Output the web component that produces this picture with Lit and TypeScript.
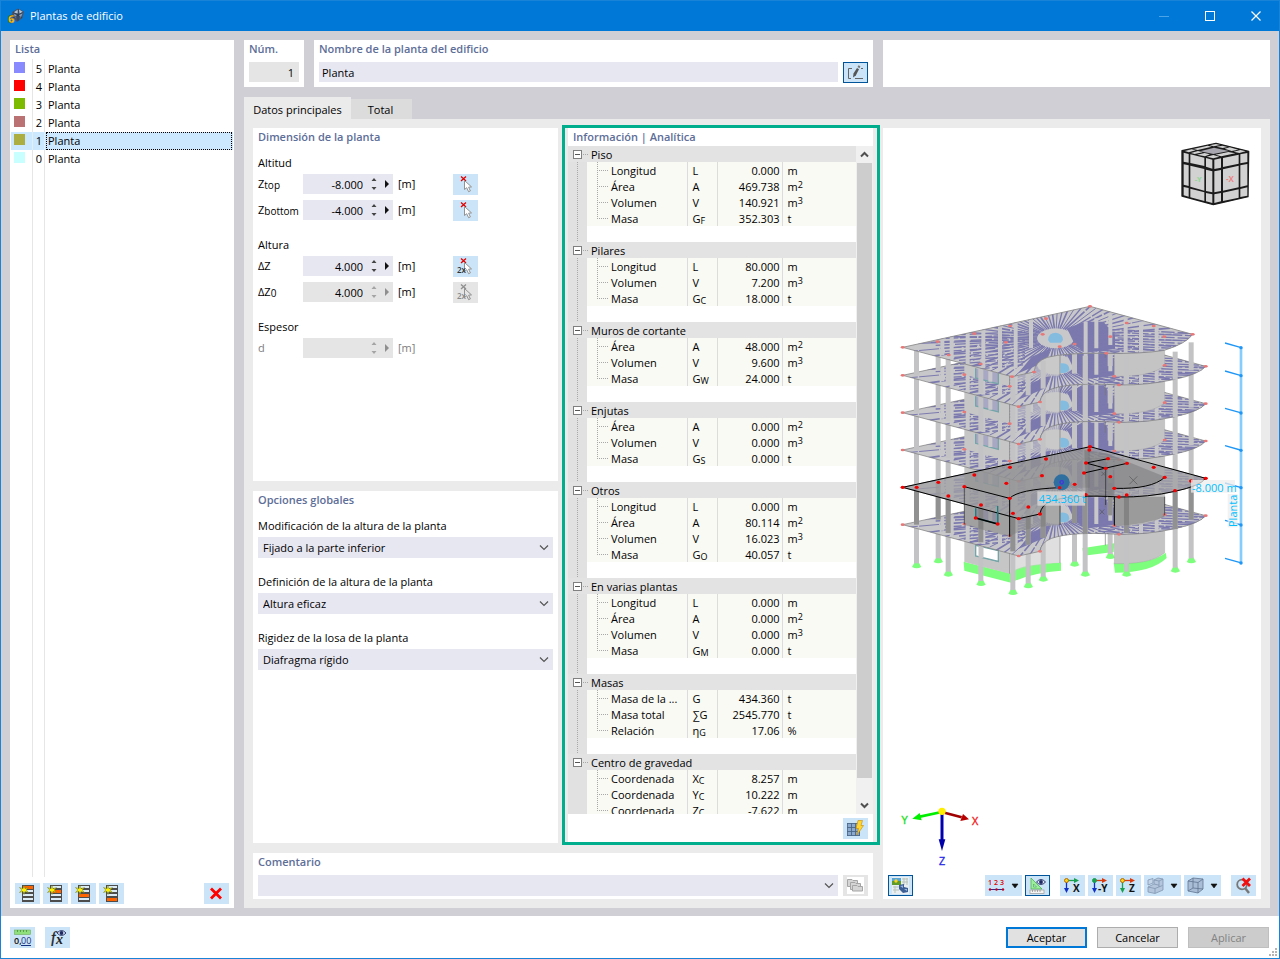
import { LitElement, html, svg, css } from "lit";
import { customElement, state } from "lit/decorators.js";
import { classMap } from "lit/directives/class-map.js";

type Storey = { no: number; color: string };
type Row = [name: string, symbol: string, sub: string, value: string, unit: string, power: string];
type Group = { title: string; rows: Row[] };

const STOREYS: Storey[] = [
  { no: 5, color: "#8a8aff" },
  { no: 4, color: "#ff0000" },
  { no: 3, color: "#7dbb00" },
  { no: 2, color: "#bb7272" },
  { no: 1, color: "#acae42" },
  { no: 0, color: "#c8ffff" },
];

const GROUPS: Group[] = [
  { title: "Piso", rows: [
    ["Longitud", "L", "", "0.000", "m", ""],
    ["Área", "A", "", "469.738", "m", "2"],
    ["Volumen", "V", "", "140.921", "m", "3"],
    ["Masa", "G", "F", "352.303", "t", ""]] },
  { title: "Pilares", rows: [
    ["Longitud", "L", "", "80.000", "m", ""],
    ["Volumen", "V", "", "7.200", "m", "3"],
    ["Masa", "G", "C", "18.000", "t", ""]] },
  { title: "Muros de cortante", rows: [
    ["Área", "A", "", "48.000", "m", "2"],
    ["Volumen", "V", "", "9.600", "m", "3"],
    ["Masa", "G", "W", "24.000", "t", ""]] },
  { title: "Enjutas", rows: [
    ["Área", "A", "", "0.000", "m", "2"],
    ["Volumen", "V", "", "0.000", "m", "3"],
    ["Masa", "G", "S", "0.000", "t", ""]] },
  { title: "Otros", rows: [
    ["Longitud", "L", "", "0.000", "m", ""],
    ["Área", "A", "", "80.114", "m", "2"],
    ["Volumen", "V", "", "16.023", "m", "3"],
    ["Masa", "G", "O", "40.057", "t", ""]] },
  { title: "En varias plantas", rows: [
    ["Longitud", "L", "", "0.000", "m", ""],
    ["Área", "A", "", "0.000", "m", "2"],
    ["Volumen", "V", "", "0.000", "m", "3"],
    ["Masa", "G", "M", "0.000", "t", ""]] },
  { title: "Masas", rows: [
    ["Masa de la ...", "G", "", "434.360", "t", ""],
    ["Masa total", "∑G", "", "2545.770", "t", ""],
    ["Relación", "η", "G", "17.06", "%", ""]] },
  { title: "Centro de gravedad", rows: [
    ["Coordenada", "X", "C", "8.257", "m", ""],
    ["Coordenada", "Y", "C", "10.222", "m", ""],
    ["Coordenada", "Z", "C", "-7.622", "m", ""]] },
];

const base = css`
  * { box-sizing: border-box; }
  button, input, select {
    font: inherit; color: inherit; margin: 0; padding: 0; border: 0; border-radius: 0; background: none;
  }
  svg { display: block; }
  .tool {
    width: 25px; height: 21px; flex: none; background: #cce4f7;
    display: flex; align-items: center; justify-content: center;
  }
  .tool.wide { width: 37px; gap: 6px; }
  .tool.on { border: 1px solid #005499; }
  .tool.off { background: #e5e5e5; }
`;

/* ---------- icons ---------- */

const icon = (body: unknown, w = 17, h = 17) =>
  html`<svg width=${w} height=${h} viewBox="0 0 ${w} ${h}" aria-hidden="true">${body}</svg>`;

const appIcon = icon(svg`
  <path d="M4 4 L10 .5 L16 3.500 L14.500 10 L9 14 L4 9Z" fill="#44546c"/>
  <path d="M5.500 4.500 L10 1.500 L10 5.500Z M11 1.500 L15 4 L11.500 5.500Z" fill="#b4c3d6"/>
  <path d="M6 6 L9 7 L7 10Z M11 7 L14.500 5.500 L12.500 10Z" fill="#8b9eb8"/>
  <path d="M5 4 L14 10 M15 4 L5 10 M10 1 V13" stroke="#1f2c40" stroke-width=".5"/>
  <text x="0" y="15" font-family="Open Sans" font-weight="800" font-size="11" fill="#f5c21b" stroke="#5b4300" stroke-width=".3">6</text>`);

const listIcon = (row: number) => icon(svg`
  <rect x="3" y="0" width="12" height="17" fill="#4d4d4d"/>
  ${[0, 1, 2, 3].map(i => svg`<rect x="4" y=${1 + i * 4} width="10" height=${i === row ? 3 : 2} fill=${i === row ? "#ff6400" : "#dcebf8"}/>`)}
  <path d="M5 .5 L6 3.700 L9.500 2.500 L7.200 5 L9.500 7.500 L6 6.300 L5 9.500 L4 6.300 L.5 7.500 L2.800 5 L.5 2.500 L4 3.700Z" fill="#fff200" stroke="#6c7a18" stroke-width=".5"/>`);

const deleteIcon = icon(svg`<path d="M2 2.500 L12 12.500 M12 2.500 L2 12.500" stroke="#f00" stroke-width="2.800"/>`, 15, 15);

const editIcon = icon(svg`
  <path d="M5 4.500 H1.500 V14.500 H4 M8 14.500 H16 M14 4.500 H16" fill="none" stroke="#666"/>
  <path d="M6.500 9.500 L10 4 L12 5.200 L8.800 11.500 L6 13.500Z" fill="#555"/>
  <path d="M10.500 3 L11.500 1.200 L13.400 2.300 L12.500 4.200Z" fill="#777"/>`);

const pickIcon = (twice: boolean, off = false) => icon(svg`
  <path d="M4 .5 L9 5 M9 .5 L4 5" stroke=${off ? "#8f8f8f" : "#e00000"} stroke-width="1.300"/>
  <path d="M7.500 4.500 V13.500 L9.700 11.700 L11.600 15.700 L13.400 14.900 L11.600 11.200 L14.500 10.900Z" fill=${off ? "#e5e5e5" : "#fff"} stroke="#888" stroke-width=".9"/>
  ${twice ? svg`<text x="0" y="15" font-family="Open Sans" font-size="8" font-weight="600" fill=${off ? "#8a8a8a" : "#333"}>2x</text>` : ""}`);

const gridBoltIcon = icon(svg`
  <rect x="1" y="3.500" width="12" height="12" fill="#8aa9cd"/>
  <path d="M.5 3 V16 M4.500 3 V16 M8.500 3 V16 M12.500 3 V16 M0 3.500 H13 M0 7.500 H13 M0 11.500 H13 M0 15.500 H13" stroke="#4a6788" stroke-width=".9"/>
  <path d="M11 .5 H15.500 L14 5.500 H16.500 L10 15 L11.500 8.500 H9Z" fill="#ffd634" stroke="#c98a00" stroke-width=".6"/>`);

const stackIcon = icon(svg`
  <rect width="17" height="17" fill="#fff"/>
  <g fill="#d5d5d5" stroke="#a5a5a5">
    <path d="M.5 2.500 H5 L6 3.500 H10.500 V9.500 H.5Z"/>
    <path d="M3.500 5.500 H8 L9 6.500 H13.500 V12.500 H3.500Z"/>
    <path d="M5.500 8.500 H10 L11 9.500 H15.500 V14 H5.500Z"/>
  </g>`);

const unitsIcon = icon(svg`
  <rect x=".5" y="1" width="16" height="4.500" fill="#8fe07c" stroke="#6dae60" stroke-width=".6"/>
  <path d="M3.500 1 V3 M6.500 1 V3 M9.500 1 V3 M12.500 1 V3" stroke="#4b9140" stroke-width=".8"/>
  <text x="0" y="15" font-family="Open Sans" font-size="9" font-weight="600" fill="#111">0,</text>
  <text x="7" y="15" font-family="Open Sans" font-size="9" fill="#17307f">00</text>
  <path d="M7 16.500 H17" stroke="#17307f"/>`, 18, 17);

const eye = (x: number, y: number) => svg`
  <g transform="translate(${x} ${y})">
    <path d="M0 3 Q4.500 -2 9 3 Q4.500 8 0 3Z" fill="#dfe6f5" stroke="#1e2a63" stroke-width=".9"/>
    <circle cx="4.500" cy="3" r="1.900" fill="#1e2a63"/>
  </g>`;

const formulaIcon = icon(svg`
  <text x="2" y="14" font-family="Liberation Serif" font-style="italic" font-size="16" fill="#222" stroke="#222" stroke-width=".3">f</text>
  <text x="7" y="15" font-family="Liberation Serif" font-style="italic" font-weight="700" font-size="14" fill="#222">x</text>
  ${eye(8, 1)}`, 18, 17);

const renderIcon = icon(svg`
  <rect x="0" y="0" width="17" height="17" fill="#e8eef2"/>
  <rect x="0" y="1" width="9" height="7" fill="#5f9b2a"/><rect x="0" y="1" width="9" height="3" fill="#5aa5d8"/>
  <circle cx="4" cy="4" r="1.700" fill="#ffd21c"/>
  <path d="M10 2 H16 M10 5 H16 M12 1 V8 M15 1 V8 M1 10 H7 M1 13 H7 M3 9 V16" stroke="#b9c3bb"/>
  <path d="M7 8 L12 7 L12 10 L16 11 V15 L11 16 L7 12Z" fill="#3c5f95"/><path d="M8 9 L11 8.500 V11Z M12 12 L15 12 V14Z" fill="#9fb9de"/>`);

const numbersIcon = icon(svg`
  <g font-family="Open Sans" font-size="7" font-weight="600" fill="#e00000">
    <text x="0" y="8">1</text><text x="6" y="8">2</text><text x="12" y="8">3</text></g>
  <path d="M1 12.500 H16" stroke="#2b2b8a"/>
  <circle cx="2" cy="12.500" r="1.200" fill="#c00020"/><circle cx="8.500" cy="12.500" r="1.200" fill="#c00020"/><circle cx="15" cy="12.500" r="1.200" fill="#c00020"/>`);

const rulerEyeIcon = icon(svg`
  <path d="M2 1 V12 H13Z" fill="#9df09a" stroke="#4fae58" stroke-width=".8"/>
  <path d="M4.500 7 V10 H7.500Z" fill="#cce4f7" stroke="#4fae58" stroke-width=".7"/>
  <rect x="1" y="13" width="14" height="3.500" fill="#f4f4f4" stroke="#999" stroke-width=".7"/>
  <path d="M3.500 13 V15 M6 13 V15 M8.500 13 V15 M11 13 V15" stroke="#888" stroke-width=".7"/>
  ${eye(7.5, 2)}`);

const axisIcon = (label: string, right: string, down: string, dot: string) => icon(svg`
  <path d="M3 3.500 H11" stroke=${right} stroke-width="1.300"/><path d="M10 1 L15 3.500 L10 6Z" fill=${right}/>
  <path d="M2.500 4 V12" stroke=${down} stroke-width="1.300"/><path d="M0 11 L2.500 16 L5 11Z" fill=${down}/>
  <circle cx="2.500" cy="3.500" r="2" fill=${dot} stroke=${dot === "#ffd21c" ? "#b36b00" : dot}/>
  <text x=${label.length > 1 ? 6 : 9} y="15" font-family="Open Sans" font-weight="700" font-size="10" fill="#111">${label}</text>`, 17, 17);

const blocksIcon = icon(svg`
  <g fill="#b3c6dc" stroke="#8296b0" stroke-width=".8">
    <path d="M1 10 L7 7 V3 L11 1 L16 2 V13 L8 16.500 L1 15Z"/>
    <path d="M1 10 L8 11.500 L15.500 8.500 M8 11.500 V16 M7 3 L12 4 L16 2 M12 4 V10 M7 7 L12 8.200" fill="none"/>
    <path d="M1 3 L6 1.500 L6 6 L1 8Z" fill="#c4d5e7"/></g>`);

const boxIcon = icon(svg`
  <g fill="#a9bdd6" stroke="#5f7490" stroke-width=".8">
    <path d="M1 4 L6 1 L16 2 V12 L11 16 L1 14Z"/><path d="M1 4 L11 5.500 L16 2 M11 5.500 V16 M6 1 V11 L1 14 M6 11 L16 12" fill="none"/></g>`);

const zoomOffIcon = icon(svg`
  <circle cx="7" cy="7.500" r="4.800" fill="none" stroke="#777" stroke-width="1.800"/>
  <path d="M10 11 L14 16" stroke="#777" stroke-width="2.400"/>
  <path d="M7.500 1.500 L15 9 M15 1.500 L7.500 9" stroke="#f01010" stroke-width="2.800"/>`);

const caret = icon(svg`<path d="M1 1 H7 L4 5Z" fill="#111" stroke="#111" stroke-width=".6"/>`, 8, 6);

/* ---------- model view ---------- */

const COLUMNS: [number, number][] = [
  [676, 797], [569, 820], [919, 810], [160, 810], [95, 825], [871, 838], [601, 850],
  [725, 850], [190, 850], [475, 865], [430, 885], [288, 878], [384, 905],
];

@customElement("model-view")
export class ModelView extends LitElement {
  static styles = [base, css`
    :host { display: flex; min-height: 0; }
    .scene { width: 100%; height: 100%; font-family: "Open Sans", "Noto Sans", sans-serif; }
  `];

  private floor(dy: number) {
    return `M53 ${592 + dy} L615 ${470 + dy} L962 ${565 + dy} Q945 ${588 + dy} 870 ${604 + dy} Q790 ${622 + dy} 702 ${621 + dy} Q560 ${612 + dy} 500 ${633 + dy} Q468 ${645 + dy} 465 ${672 + dy} L401 ${686 + dy}Z`;
  }

  private roof = "M53 172 L615 49 L923 133 Q905 160 838 181 Q770 192 664 190 Q540 188 487 202 Q450 215 447 246 L381 260Z";

  /* radial light pattern around the core, cut by the grey strips between panels */
  private rays(id: string, cy: number) {
    const cx = 512;
    const lines = [];
    for (let i = 0; i < 64; i++) {
      const a = (i / 64) * Math.PI * 2 + 0.03;
      const x = Math.cos(a) * 620, y = Math.sin(a) * 330;
      lines.push(svg`<path d="M${(cx + x * 0.09).toFixed(1)} ${(cy + y * 0.09).toFixed(1)} L${(cx + x).toFixed(1)} ${(cy + y).toFixed(1)}"
        stroke-width=${3 + (i % 3)} stroke-dasharray=${i % 2 ? "80 5 120 7" : "110 6 60 4"}/>`);
    }
    const strands = [];
    for (let i = 0; i < 12; i++) {
      strands.push(svg`<path d="M${110 + i * 14} ${cy - 6 + i * 9} L420 ${cy - 20 + i * 9} M640 ${cy - 28 + i * 8} L960 ${cy - 14 + i * 8}" stroke-width="4"
        stroke-dasharray=${i % 2 ? "50 8 38 5" : "64 6 40 9"}/>`);
    }
    return svg`<g clip-path="url(#${id})" stroke="#7b79ae" fill="none">
      <path d="M546 ${cy - 30} L600 ${cy - 50} H655 L690 ${cy - 10} V${cy + 32} L600 ${cy + 44} L570 ${cy + 20}Z" fill="#7b79ae" stroke="none"/>
      <path d="M498 ${cy + 30} L482 ${cy + 70} L400 ${cy + 105} L440 ${cy + 55}Z" fill="#7b79ae" stroke="none"/>
      ${lines}${strands}
      <path d="M602 ${cy - 50} V${cy + 60} M634 ${cy - 60} V${cy + 30} M172 ${cy} V${cy + 50} M200 ${cy - 10} V${cy + 90} M248 ${cy - 20} V${cy + 90} M295 ${cy - 30} V${cy + 90} M345 ${cy - 40} V${cy + 90} M392 ${cy - 50} V${cy + 90} M438 ${cy - 60} V${cy + 30} M676 ${cy - 70} V${cy + 20} M722 ${cy - 60} V${cy + 60} M768 ${cy - 50} V${cy + 60} M815 ${cy - 40} V${cy + 60}" stroke="#c8c8ca" stroke-width="12"/>
    </g>`;
  }

  private dots(dy: number) {
    const pts = [[53, 592], [962, 565], [401, 686], [465, 672], [702, 621], [238, 590], [374, 625], [839, 562], [688, 595]];
    return pts.map(([x, y]) => svg`<ellipse cx=${x} cy=${y + dy} rx="6" ry="4" fill="#e87878"/>`);
  }

  private storey(top: number, bottom: number) {
    return svg`
      <path d="M238 ${590 + top} L374 ${625 + top} L374 ${625 + bottom} L238 ${590 + bottom}Z" fill="#c6c6c7"/>
      <path d="M374 ${625 + top} Q400 ${600 + top} 524 ${593 + top} V${593 + bottom} Q410 ${600 + bottom} 374 ${625 + bottom}Z" fill="#c9c9ca" opacity=".6"/>
      <path d="M688 ${595 + top} Q800 ${597 + top} 839 ${562 + top} V${562 + bottom} Q800 ${597 + bottom} 688 ${595 + bottom}Z" fill="#c4c4c5" stroke="#999"/>
      <path d="M668 ${550 + top} H686 V${585 + top} H668Z" fill="#c9c9ca"/>
      <path d="M272 ${655 + top} V${684 + top} L340 ${702 + top} V${668 + top}" fill="#a9a8c4" stroke="#74a5a8" stroke-width="4"/>
      <path d="M288 ${655 + top} V${688 + top} M316 ${662 + top} V${695 + top}" stroke="#c9c9cc" stroke-width="12"/>
      <path d="M374 ${625 + top} V${625 + bottom} M525 ${593 + top} V${593 + bottom} M661 ${540 + top} V${540 + bottom}" stroke="#777" stroke-width="2"/>`;
  }

  private columns(top: number, bottom: number, fill: string) {
    return COLUMNS.map(([x, y]) => svg`<rect x=${x - 8} y=${y - 233 + top} width="15" height=${bottom - top} fill=${fill}/>`);
  }

  private lamp(y: number) {
    return svg`<path d="M526 ${y - 16} Q552 ${y - 20} 553 ${y + 2} Q548 ${y + 16} 526 ${y + 12}Z" fill="#84bce0"/>`;
  }

  private building() {
    const levels = [112, 0, -112, -224, -336];
    const dims = [172, 256, 368, 480, 592, 704, 818];
    return svg`
      <defs>
        ${levels.map((dy, i) => svg`<clipPath id="f${i}"><path d=${this.floor(dy)}/></clipPath>`)}
        <clipPath id="roof"><path d=${this.roof}/></clipPath>
      </defs>
      <g fill="#7dff7d">
        <path d="M236 815 L374 850 Q400 822 528 818 V842 Q440 848 378 878 L238 842Z"/>
        <path d="M686 818 Q800 822 842 788 L845 804 Q800 848 690 848Z"/>
        <path d="M592 775 L688 760 L686 786 L596 797Z"/>
        ${COLUMNS.map(([x, y]) => svg`<path d="M${x - 5} ${y - 10} H${x + 5} L${x + 14} ${y + 6} Q${x} ${y + 14} ${x - 14} ${y + 6}Z"/>`)}
      </g>
      ${this.storey(112, 226)}${this.columns(112, 228, "#c3c3c5")}
      <path d="M272 766 V798 L340 814 V782Z" fill="#fff" stroke="#74a5a8" stroke-width="4"/>
      <path d="M288 760 V804" stroke="#c3c3c5" stroke-width="15"/>
      ${levels.map((dy, i) => svg`
        <path d=${this.floor(dy)} fill="#c8c8cb"/>
        ${this.rays(`f${i}`, 560 + dy)}
        <path d=${this.floor(dy)} fill="none" stroke="#777" stroke-width="2"/>
        ${this.storey(i === 4 ? -420 : dy - 112, dy)}
        ${this.columns(i === 4 ? -420 : dy - 112, dy, "#c3c3c5")}
        ${this.lamp(572 + dy)}
        ${this.dots(dy)}`)}
      <path d=${this.roof} fill="#c8c8cb"/>
      ${this.rays("roof", 145)}
      <path d=${this.roof} fill="none" stroke="#888" stroke-width="2.500"/>
      <path d="M489 150 Q491 128 512 128 Q534 130 534 150 L528 158 H495Z" fill="#84bce0"/>
      ${[[53, 172], [615, 49], [923, 133], [381, 260], [447, 246], [664, 190], [158, 155], [268, 131], [375, 108], [483, 86], [191, 195], [287, 222], [473, 133], [725, 99], [806, 108], [838, 140], [676, 140], [569, 162], [524, 170], [363, 157]].map(([x, y]) =>
        svg`<ellipse cx=${x} cy=${y} rx="6" ry="4" fill="#e87878"/>`)}

      <path d="M238 590 L374 625 V740 L238 705Z" fill="#6a6a6a" opacity=".4"/>
      <path d="M374 625 Q420 592 524 593 V705 Q410 712 374 740Z" fill="#6a6a6a" opacity=".35"/>
      <path d="M688 620 H839 V680 Q780 705 688 707Z" fill="#6a6a6a" opacity=".45"/>
      ${COLUMNS.map(([x, y]) => svg`<rect x=${x - 8} y=${y - 233} width="15" height="112" fill="#777" opacity=".65"/>`)}
      <path d=${this.floor(0)} fill="#a2a2a4" opacity=".75"/>
      <path d="M238 552 L374 522 V625 L238 590Z M374 522 L615 470 V593 H524 Q410 600 374 625Z" fill="#777" opacity=".3"/>
      <path d="M598 480 L665 490 L840 560 Q800 598 688 595 V620 H602Z" fill="#555" opacity=".3"/>
      <path d=${this.floor(0)} fill="none" stroke="#000" stroke-width="3"/>
      <g fill="none" stroke="#000" stroke-width="3">
        <path d="M238 590 L374 625 Q400 598 524 593"/><path d="M688 595 Q800 598 839 562"/>
        <path d="M669 506 L603 519 L662 535 M597 549 L726 520"/>
        <path d="M374 625 V740 M688 621 V707"/>
        <path d="M238 590 V703 M839 620 V675 M525 640 V705 M662 535 V645" stroke-width="1.500"/>
      </g>
      <path d="M272 655 V684 L338 702 V648" fill="none" stroke="#1d8080" stroke-width="4"/>
      <path d="M272 684 L338 702" stroke="#000" stroke-width="4"/>
      <g stroke="#555" stroke-width="2"><path d="M733 559 L757 583 M757 559 L733 583 M644 658 L658 673 M658 658 L644 673 M649 545 L662 558 M662 545 L649 558"/></g>
      ${[[53, 592], [95, 592], [160, 577], [190, 618], [238, 590], [268, 555], [288, 645], [375, 532], [374, 625], [384, 670], [364, 580], [430, 651], [401, 686], [465, 672], [471, 557], [483, 507], [569, 583], [524, 593], [597, 549], [603, 519], [602, 614], [613, 480], [615, 470], [669, 506], [662, 535], [676, 560], [688, 595], [702, 621], [725, 615], [726, 520], [806, 532], [839, 562], [870, 602], [918, 573], [962, 565], [272, 684], [338, 702]].map(([x, y]) =>
        svg`<ellipse cx=${x} cy=${y} rx="6" ry="5" fill="#f00000"/>`)}
      <circle cx="530" cy="577" r="24" fill="#2f6f9f"/><circle cx="530" cy="577" r="5" fill="none" stroke="#4338d8" stroke-width="4"/>
      <circle cx="524" cy="593" r="5" fill="#f00000"/>
      <rect x="457" y="604" width="143" height="43" fill="#d9d9d9" opacity=".8"/>
      <text x="461" y="639" font-size="33" fill="#00bfff">434.360 t</text>

      <path d="M1068 172 V820" stroke="#84cdfd" stroke-width="8"/>
      ${dims.map(y => svg`<path d="M1020 ${y - 13} L1066 ${y}" stroke="#1e96f5" stroke-width="4"/><circle cx="1068" cy=${y + 1} r="5" fill="#1e96f5"/>`)}
      <rect x="918" y="570" width="132" height="38" fill="#eeeeee" opacity=".75"/>
      <text x="921" y="606" font-size="33" fill="#00bfff">-8.000 m</text>
      <rect x="1028" y="612" width="30" height="100" fill="#eeeeee" opacity=".75"/>
      <text transform="translate(1056 711) rotate(-90)" font-size="33" fill="#00bfff">Planta</text>`;
  }

  private cube() {
    return svg`
      <path d="M66 62 L168 40 L266 64 L264 200 L160 224 L66 198Z" fill="#1b1b1b" stroke="#1b1b1b" stroke-width="4" stroke-linejoin="round"/>
      <g fill="#d2d2d3">
        <path d="M71 68 L86 72 V98 L71 95Z M91 73 L133 83 V108 L91 99Z M138 84 L157 89 V116 L138 110Z"/>
        <path d="M71 103 L86 106 V168 L71 164Z M91 107 L133 117 V182 L91 170Z M138 119 L157 124 V187 L138 183Z"/>
        <path d="M71 171 L86 174 V200 L71 196Z M91 176 L133 187 V213 L91 202Z M138 189 L157 193 V219 L138 214Z"/>
        <path d="M163 89 L183 85 V113 L163 117Z M189 84 L236 74 V101 L189 111Z M241 73 L262 69 V96 L241 100Z"/>
        <path d="M163 124 L183 120 V183 L163 187Z M189 118 L236 107 V172 L189 182Z M241 106 L262 102 V166 L241 171Z"/>
        <path d="M163 193 L183 189 V214 L163 219Z M189 188 L236 178 V203 L189 213Z M241 177 L262 172 V197 L241 201Z"/>
        <path d="M74 63 L95 58 L107 61 L86 67Z M100 57 L143 47 L155 50 L113 60Z M149 46 L168 42 L181 45 L161 49Z"/>
        <path d="M93 69 L114 63 L128 67 L104 72Z M187 47 L203 51 L188 54 L170 50Z M209 52 L235 59 L215 63 L194 56Z M241 60 L257 64 L238 69 L221 65Z"/>
        <path d="M111 74 L134 69 L150 73 L135 79Z M140 80 L160 75 L178 80 L160 85Z M166 74 L205 66 L226 70 L184 79Z"/>
        <path d="M120 64 L162 53 L207 63 L160 72Z" fill="#a8a6ae"/>
      </g>
      <text x="104" y="156" font-size="22" font-weight="700" fill="#8fd896">-Y</text>
      <text x="198" y="156" font-size="24" font-weight="700" fill="#ee8484">-X</text>`;
  }

  private axes() {
    return svg`
      <path d="M170 66 L105 80" stroke="#00ee00" stroke-width="8"/><path d="M82 86 L104 69 L110 91Z" fill="#00f000"/>
      <path d="M170 66 L230 82" stroke="#a00000" stroke-width="8"/><path d="M252 88 L234 72 L226 93Z" fill="#b80000"/>
      <path d="M171 70 V150" stroke="#0000b0" stroke-width="9"/><path d="M171 183 L161 148 H181Z" fill="#0000a8"/>
      <circle cx="171" cy="64" r="11" fill="#ffee00"/>
      <g font-size="30" font-family="Liberation Sans">
        <text x="49" y="102" fill="#18e018" stroke="#18e018">Y</text><text x="260" y="105" fill="#f01818" stroke="#f01818">X</text><text x="162" y="224" fill="#2828e8" stroke="#2828e8">Z</text>
      </g>`;
  }

  render() {
    return html`<svg class="scene" viewBox="883 128 378 742" role="img" aria-label="Modelo">
      <g transform="translate(885 290) scale(.33333)">${this.building()}</g>
      <g transform="translate(1160 130) scale(.33333)">${this.cube()}</g>
      <g transform="translate(885 790) scale(.33333)">${this.axes()}</g>
    </svg>`;
  }
}

/* ---------- analysis tree ---------- */

@customElement("info-tree")
export class InfoTree extends LitElement {
  static styles = [base, css`
    :host { display: flex; min-height: 0; overflow: hidden; }
    .body { flex: 1; min-width: 0; overflow: hidden; }
    .tree { width: 100%; border-collapse: collapse; table-layout: fixed; line-height: 14px; }
    .tree td, .tree th { padding: 2px 0 0; height: 16px; font-weight: 400; text-align: left; white-space: nowrap; }
    .tree th { padding: 0; }
    .gutter { width: 19px; } .name { width: 100px; } .sym { width: 30px; } .val { width: 65px; }
    .tree .trunk {
      background: repeating-linear-gradient(180deg, #a8a8a8 0 1px, transparent 1px 2px) 9px 0 / 1px 100% no-repeat, #e1e1e1;
    }
    .tree .bare { background: #e1e1e1; }
    .group { background: #e3e3e3; }
    .head { display: flex; align-items: center; gap: 9px; height: 16px; padding-left: 5px;
      background: repeating-linear-gradient(90deg, #a8a8a8 0 1px, transparent 1px 2px) 15px 8px / 5px 1px no-repeat; }
    .caption { padding-top: 2px; }
    .box { width: 9px; height: 9px; border: 1px solid #808080; background: #fff; display: flex; align-items: center; justify-content: center; }
    .box::before { content: ""; width: 5px; height: 1px; background: #555; }
    .item { background: #f9faf4; }
    .tree .label { padding-left: 24px; overflow: hidden; text-overflow: ellipsis; background:
      repeating-linear-gradient(180deg, #a8a8a8 0 1px, transparent 1px 2px) 10px 0 / 1px 100% no-repeat,
      repeating-linear-gradient(90deg, #a8a8a8 0 1px, transparent 1px 2px) 10px 8px / 11px 1px no-repeat; }
    .tree .label.last { background-size: 1px 9px, 11px 1px; }
    .tree .cell { border-left: 1px solid #dcdcdc; padding-left: 5px; }
    .tree .num { text-align: right; padding-right: 2px; }
    sub, sup { font-size: 9px; line-height: 0; vertical-align: -1px; }
    sup { vertical-align: 3px; }
    .bar { flex: none; width: 17px; padding: 0 1px; background: #f0f0f0; display: flex; flex-direction: column; }
    .arrow { height: 17px; flex: none; display: flex; align-items: center; justify-content: center; }
    .rail { flex: 1; display: flex; flex-direction: column; }
    .thumb { flex: 0 0 97%; background: #cdcdcd; }
  `];

  render() {
    return html`
      <div class="body">
        <table class="tree">
          <colgroup><col class="gutter"><col class="name"><col class="sym"><col class="val"><col></colgroup>
          ${GROUPS.map((g, gi) => {
            const trunk = gi < GROUPS.length - 1 ? "trunk" : "bare";
            return html`<tbody>
              <tr class="group"><th colspan="5" scope="rowgroup"><div class="head"><button class="box" aria-label="Contraer ${g.title}"></button><span class="caption">${g.title}</span></div></th></tr>
              ${g.rows.map(([name, sym, sub, value, unit, power], i) => html`<tr class="item">
                <td class=${trunk}></td>
                <td class="label ${i === g.rows.length - 1 ? "last" : ""}">${name}</td>
                <td class="cell">${sym}${sub ? html`<sub>${sub}</sub>` : ""}</td>
                <td class="cell num">${value}</td>
                <td class="cell">${unit}${power ? html`<sup>${power}</sup>` : ""}</td>
              </tr>`)}
              <tr><td class=${trunk}></td><td colspan="4"></td></tr>
            </tbody>`;
          })}
        </table>
      </div>
      <div class="bar">
        <button class="arrow" aria-label="Subir">${icon(svg`<path d="M1 5.500 L4.500 2 L8 5.500" fill="none" stroke="#505050" stroke-width="2"/>`, 9, 7)}</button>
        <div class="rail"><div class="thumb"></div></div>
        <button class="arrow" aria-label="Bajar">${icon(svg`<path d="M1 1.500 L4.500 5 L8 1.500" fill="none" stroke="#505050" stroke-width="2"/>`, 9, 7)}</button>
      </div>`;
  }
}

/* ---------- dialog ---------- */

@customElement("app-root")
export class AppRoot extends LitElement {
  static styles = [base, css`
    :host {
      display: flex; flex-direction: column; height: 100vh; min-height: 720px; min-width: 1100px; box-sizing: border-box;
      border: 1px solid #1883d7; border-top: 0; background: #d0cfd5; color: #000;
      font: 11px/16px "Open Sans", "Noto Sans", sans-serif;
    }
    .titlebar { height: 31px; flex: none; display: flex; align-items: center; gap: 5px; padding-left: 7px;
      background: #0078d7; border-top: 1px solid #1883d7; color: #fff; }
    .titlebar h1 { font: inherit; margin: 0; flex: 1; }
    .win { width: 46px; height: 30px; display: flex; align-items: center; justify-content: center; margin-left: -5px; }
    .main { flex: 1; min-height: 0; display: flex; gap: 10px; padding: 9px 9px 8px; }
    .card { background: #fff; padding: 1px 5px 0; min-width: 0; }
    h2 { margin: 0; font-size: 11px; line-height: 16px; font-weight: 600; color: #5d6e98; white-space: nowrap; }
    .label-title { display: block; font-weight: 600; color: #5d6e98; }

    .list { width: 224px; flex: none; display: flex; flex-direction: column; padding: 1px 1px 4px; }
    .list h2 { padding-left: 4px; margin-bottom: 2px; }
    .storeys { flex: 1; margin: 0 0 6px; padding: 1px 0 0; list-style: none;
      background: linear-gradient(#e6e6e6, #e6e6e6) 21px 0 / 1px 100% no-repeat, linear-gradient(#e6e6e6, #e6e6e6) 33px 0 / 1px 100% no-repeat; }
    .storey { width: 100%; height: 18px; display: grid; grid-template-columns: 11px 14px 1fr; column-gap: 3px; padding: 0 1px 0 3px; text-align: left; align-items: center; }
    .storey.sel { background: linear-gradient(#e2eef8, #e2eef8) 21px 0 / 1px 100% no-repeat, linear-gradient(#e2eef8, #e2eef8) 33px 0 / 1px 100% no-repeat, #cce8ff; }
    .swatch { width: 11px; height: 11px; margin-bottom: 3px; }
    .no { text-align: right; }
    .title { height: 18px; border: 1px dotted transparent; padding-left: 1px; margin-left: 1px; }
    .sel .title { border-color: #000; }
    .bar { display: flex; gap: 3px; padding: 0 4px; }
    .push { margin-left: auto; }

    .side { flex: 1; min-width: 0; display: flex; flex-direction: column; }
    .top { display: flex; gap: 10px; height: 47px; flex: none; }
    .num { width: 60px; } .naming { width: 559px; } .preview { flex: 1; }
    .field { display: block; width: 100%; height: 20px; background: #e7e7f2; padding: 1px 3px 0; }
    .gray { background: #e5e5e5; text-align: right; padding-right: 5px; }
    .top .field { margin-top: 5px; }
    .top .card { display: block; }
    .line { display: flex; gap: 5px; }
    .line .tool { margin-top: 5px; }

    .tabs { display: flex; align-items: flex-end; height: 32px; padding-top: 10px; flex: none; }
    .tab { height: 20px; background: #dcdcdc; width: 61px; padding: 2px 2px 0 0; }
    .tab.active { height: 22px; width: 107px; padding: 4px 0 0; background: #ebebeb; }
    .page { flex: 1; min-height: 0; background: #ebebeb; padding: 9px; display: grid; gap: 10px;
      grid-template-columns: 305px 305px 1fr; grid-template-rows: 353fr 352fr 46px; }
    .dims { padding-bottom: 8px; overflow: hidden; }
    .dims h2, .opts h2 { margin-bottom: 10px; }
    .dims h3 { margin: 14px 0 0; font: inherit; }
    .dims h2 + h3 { margin-top: 0; }
    .row { display: flex; align-items: center; height: 26px; }
    .row label { width: 45px; }
    .spin { width: 90px; height: 20px; display: flex; align-items: center; background: #e7e7f2; }
    .spin input { width: 60px; text-align: right; height: 20px; padding-top: 1px; }
    .spin .ud { margin-left: 7px; width: 8px; height: 12px; }
    .spin .more { margin-left: 6px; }
    .spin.off { background: #e5e5e5; }
    .spin.off button { opacity: .4; }
    .unit { width: 60px; padding-left: 5px; }
    .dim { color: #7d7d7d; }
    sub { font-size: 10px; line-height: 0; vertical-align: -1px; }

    .opt { display: block; margin-bottom: 16px; }
    select { display: block; width: 100%; height: 21px; padding: 1px 5px 0; appearance: none; margin-top: 3px; background: #e7e7f2
      url("data:image/svg+xml,%3Csvg xmlns='http://www.w3.org/2000/svg' width='10' height='6'%3E%3Cpath d='M1 .5L5 4.500L9 .5' fill='none' stroke='%23555' stroke-width='1.200'/%3E%3C/svg%3E") right 4px center no-repeat; }

    .info { grid-column: 2; grid-row: 1 / 3; position: relative; display: flex; flex-direction: column; padding: 1px 0 4px; }
    .info::after { content: ""; position: absolute; inset: -3px -7px -2px -6px; border: 3px solid #00ae8d; pointer-events: none; }
    .info h2 { padding-left: 5px; margin-bottom: 1px; }
    .info info-tree { flex: 1; }
    .info .tool { align-self: flex-end; margin: 4px 5px 0 0; }
    .note { grid-column: 1 / 3; }
    .note select { margin-top: 5px; flex: 1; }
    .view { grid-column: 3; grid-row: 1 / 4; display: flex; flex-direction: column; padding: 0 0 3px; }
    .view model-view { flex: 1; }
    .view .bar { padding: 5px; padding-bottom: 0; }
    .gap { margin-left: 7px; }

    .footer { height: 42px; flex: none; background: #fff; display: flex; align-items: center; gap: 10px; padding: 0 10px 0 9px; position: relative; }
    .cmd { width: 81px; height: 21px; border: 1px solid #adadad; background: #e1e1e1; padding-top: 1px; }
    .cmd.primary { border: 2px solid #0078d7; }
    .cmd:disabled { background: #cccccc; border-color: #bfbfbf; color: #838383; }
    .grip { position: absolute; right: 2px; bottom: 2px; }
  `];

  @state() private current = 1;

  private spin(id: string, label: unknown, value: string, off: boolean, dim = false, tool: unknown = "") {
    return html`<div class="row ${dim ? "dim" : ""}">
      <label for=${id}>${label}</label>
      <span class="spin ${off ? "off" : ""}">
        <input id=${id} .value=${value} ?readonly=${off}>
        <button class="ud" aria-label="Ajustar" ?disabled=${off}>${icon(svg`<path d="M1.500 3 L4 0 L6.500 3Z M1.500 9 L4 12 L6.500 9Z" fill="#444"/>`, 8, 12)}</button>
        <button class="more" aria-label="Más" ?disabled=${off}>${icon(svg`<path d="M1 0 L5 4 L1 8Z" fill="#111"/>`, 6, 8)}</button>
      </span>
      <span class="unit">[m]</span>${tool}
    </div>`;
  }

  private option(label: string, value: string) {
    return html`<label class="opt">${label}<select><option>${value}</option></select></label>`;
  }

  render() {
    return html`
      <header class="titlebar">${appIcon}<h1>Plantas de edificio</h1>
        <button class="win" aria-label="Minimizar" disabled>${icon(svg`<path d="M0 5.500 H10" stroke="#4ba3e8"/>`, 10, 10)}</button>
        <button class="win" aria-label="Maximizar">${icon(svg`<rect x=".5" y=".5" width="9" height="9" fill="none" stroke="#fff"/>`, 10, 10)}</button>
        <button class="win" aria-label="Cerrar">${icon(svg`<path d="M.5 .5 L9.500 9.500 M9.500 .5 L.5 9.500" stroke="#fff" stroke-width="1.200"/>`, 10, 10)}</button>
      </header>
      <main class="main">
        <section class="card list">
          <h2>Lista</h2>
          <ul class="storeys">${STOREYS.map(s => html`<li>
            <button class=${classMap({ storey: true, sel: s.no === this.current })} @click=${() => (this.current = s.no)}>
              <span class="swatch" style="background:${s.color}"></span><span class="no">${s.no}</span><span class="title">Planta</span>
            </button></li>`)}</ul>
          <div class="bar">
            ${[0, 1, 2, 3].map(i => html`<button class="tool" aria-label="Nueva planta">${listIcon(i)}</button>`)}
            <button class="tool push" aria-label="Eliminar">${deleteIcon}</button>
          </div>
        </section>
        <div class="side">
          <div class="top">
            <label class="card num"><span class="label-title">Núm.</span><input class="field gray" .value=${String(this.current)} readonly></label>
            <div class="card naming"><label class="label-title" for="name">Nombre de la planta del edificio</label>
              <div class="line"><input class="field" id="name" value="Planta"><button class="tool on" aria-label="Editar nombre">${editIcon}</button></div></div>
            <div class="card preview"></div>
          </div>
          <nav class="tabs"><button class="tab active">Datos principales</button><button class="tab">Total</button></nav>
          <div class="page">
            <section class="card dims">
              <h2>Dimensión de la planta</h2>
              <h3>Altitud</h3>
              ${this.spin("ztop", html`Z<sub>top</sub>`, "-8.000", false, false, html`<button class="tool" aria-label="Seleccionar">${pickIcon(false)}</button>`)}
              ${this.spin("zbot", html`Z<sub>bottom</sub>`, "-4.000", false, false, html`<button class="tool" aria-label="Seleccionar">${pickIcon(false)}</button>`)}
              <h3>Altura</h3>
              ${this.spin("dz", "ΔZ", "4.000", false, false, html`<button class="tool" aria-label="Seleccionar dos">${pickIcon(true)}</button>`)}
              ${this.spin("dz0", html`ΔZ<sub>0</sub>`, "4.000", true, false, html`<button class="tool off" aria-label="Seleccionar dos" disabled>${pickIcon(true, true)}</button>`)}
              <h3>Espesor</h3>
              ${this.spin("d", "d", "", true, true)}
            </section>
            <section class="card opts">
              <h2>Opciones globales</h2>
              ${this.option("Modificación de la altura de la planta", "Fijado a la parte inferior")}
              ${this.option("Definición de la altura de la planta", "Altura eficaz")}
              ${this.option("Rigidez de la losa de la planta", "Diafragma rígido")}
            </section>
            <section class="card info">
              <h2>Información | Analítica</h2>
              <info-tree></info-tree>
              <button class="tool" aria-label="Calcular">${gridBoltIcon}</button>
            </section>
            <section class="card note">
              <label class="label-title" for="note">Comentario</label>
              <div class="line"><select id="note"><option></option></select><button class="tool off" aria-label="Biblioteca" disabled>${stackIcon}</button></div>
            </section>
            <section class="card view">
              <model-view></model-view>
              <div class="bar">
                <button class="tool on" aria-label="Representación">${renderIcon}</button>
                <button class="tool wide push" aria-label="Numeración">${numbersIcon}${caret}</button>
                <button class="tool on" aria-label="Cotas">${rulerEyeIcon}</button>
                <button class="tool gap" aria-label="Vista X">${axisIcon("X", "#18a050", "#1030c8", "#ffd21c")}</button>
                <button class="tool" aria-label="Vista -Y">${axisIcon("-Y", "#d83a10", "#1030c8", "#18a050")}</button>
                <button class="tool" aria-label="Vista Z">${axisIcon("Z", "#d83a10", "#18a050", "#ffd21c")}</button>
                <button class="tool wide" aria-label="Visibilidad">${blocksIcon}${caret}</button>
                <button class="tool wide" aria-label="Caja">${boxIcon}${caret}</button>
                <button class="tool gap" aria-label="Restablecer zoom">${zoomOffIcon}</button>
              </div>
            </section>
          </div>
        </div>
      </main>
      <footer class="footer">
        <button class="tool" aria-label="Unidades">${unitsIcon}</button>
        <button class="tool" aria-label="Fórmulas">${formulaIcon}</button>
        <button class="cmd primary push">Aceptar</button>
        <button class="cmd">Cancelar</button>
        <button class="cmd" disabled>Aplicar</button>
        <span class="grip">${icon(svg`<path d="M6 0 H8 V2 H6Z M6 3 H8 V5 H6Z M3 3 H5 V5 H3Z M6 6 H8 V8 H6Z M3 6 H5 V8 H3Z M0 6 H2 V8 H0Z" fill="#b5b5b5"/>`, 8, 8)}</span>
      </footer>`;
  }
}
